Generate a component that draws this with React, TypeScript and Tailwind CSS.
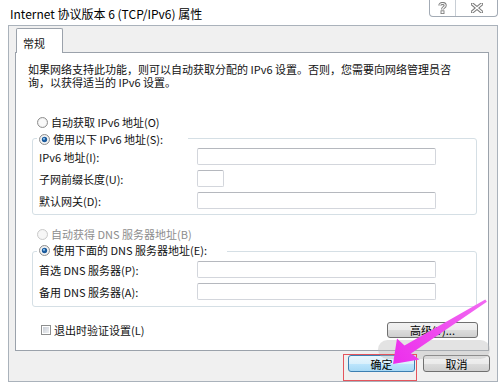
import React from 'react';

function Radio({ checked, disabled }: { checked?: boolean; disabled?: boolean }) {
  return (
    <svg width="11" height="11" viewBox="0 0 11 11" className="shrink-0">
      <circle
        cx="5.5"
        cy="5.5"
        r="5"
        fill={disabled ? '#f4f4f4' : '#eeeeee'}
        stroke={disabled ? '#c9c9c9' : '#8f8f8f'}
        strokeWidth="1"
      />
      <circle cx="5.5" cy="5.5" r="3.6" fill={disabled ? '#f7f7f7' : '#f9f9f9'} />
      {checked && (
        <>
          <circle cx="5.5" cy="5.5" r="2.7" fill="#1c5b9c" />
          <circle cx="5" cy="4.8" r="1.1" fill="#8ec2ef" />
        </>
      )}
    </svg>
  );
}

function Checkbox() {
  return (
    <div className="flex h-[10px] w-[10px] shrink-0 items-center justify-center border border-[#8e8f8f] bg-white">
      <div className="h-[6px] w-[6px] bg-[linear-gradient(135deg,#c9ced6,#eef0f2)]" />
    </div>
  );
}

function Field({ label, small, className }: { label: string; small?: boolean; className: string }) {
  return (
    <div className={'flex h-[17px] items-center ' + className}>
      <span className="w-[164px] pl-[6px] whitespace-nowrap">{label}</span>
      <div
        className={
          small
            ? 'h-[17px] w-[27px] rounded-[2px] border border-[#d3d6dc] border-t-[#b5b8be] bg-white'
            : 'h-[17px] w-[239px] rounded-[2px] border border-[#d3d6dc] border-t-[#b5b8be] bg-white'
        }
      />
    </div>
  );
}

const btn =
  'flex items-center justify-center rounded-[3px] border border-[#707070] bg-[linear-gradient(#f2f2f2_0%,#ebebeb_50%,#dddddd_50%,#cfcfcf_100%)] text-[11px] leading-[12px] text-black';

export default function App() {
  return (
    <div className="relative h-[388px] w-[501px] overflow-hidden bg-white font-['Noto_Sans_CJK_SC','Noto_Sans',sans-serif] text-[11px] leading-[12px] text-[#111]">
      {/* title bar */}
      <div className="flex h-[25px] items-start">
        <div className="pl-[10px] pt-[6px] text-[12px] leading-[16px] whitespace-nowrap text-black">
          Internet 协议版本 6 (TCP/IPv6) 属性
        </div>
        <div className="ml-auto mr-[3px] flex h-[17px] w-[69px] rounded-b-[4px] border border-t-0 border-[#a3abb5] bg-white">
          <div className="flex w-[26px] items-center justify-center border-r border-[#c8ced5]">
            <svg width="9" height="12" viewBox="0 0 9 12">
              <path d="M1.8 3.4 C1.8 0.8 7.2 0.8 7.2 3.4 C7.2 5.4 4.5 5.2 4.5 7.6" fill="none" stroke="#7d7d7d" strokeWidth="3" />
              <path d="M1.8 3.4 C1.8 0.8 7.2 0.8 7.2 3.4 C7.2 5.4 4.5 5.2 4.5 7.6" fill="none" stroke="#ffffff" strokeWidth="1.1" />
              <rect x="3" y="8.8" width="3" height="2.8" fill="#ffffff" stroke="#7d7d7d" strokeWidth="0.9" />
            </svg>
          </div>
          <div className="flex flex-1 items-center justify-center">
            <svg width="12" height="10" viewBox="0 0 12 10">
              <path d="M1.5 1.2 L10.5 8.8 M10.5 1.2 L1.5 8.8" stroke="#7d7d7d" strokeWidth="3.4" strokeLinecap="square" />
              <path d="M1.5 1.2 L10.5 8.8 M10.5 1.2 L1.5 8.8" stroke="#ffffff" strokeWidth="1.3" strokeLinecap="square" />
            </svg>
          </div>
        </div>
      </div>

      {/* client area */}
      <div className="ml-[8px] flex h-[357px] w-[490px] flex-col border border-[#aab2bb] bg-[#f0f0f0]">
        <div className="relative z-10 -mb-px ml-[7px] mt-[2px] h-[25px] w-[47px] rounded-t-[2px] border border-b-0 border-[#9ba2ab] bg-white pl-[6px] pt-[8px]">
          常规
        </div>
        <div className="ml-[6px] flex h-[299px] w-[474px] flex-col border border-[#9ba2ab] bg-white">
          <div className="ml-[12px] mt-[10px] whitespace-nowrap leading-[13px]">
            如果网络支持此功能，则可以自动获取分配的 IPv6 设置。否则，您需要向网络管理员咨
            <br />
            询，以获得适当的 IPv6 设置。
          </div>

          <div className="ml-[21px] mt-[26px] flex h-[14px] items-center gap-[3px] whitespace-nowrap">
            <Radio />
            自动获取 IPv6 地址(O)
          </div>

          <div className="ml-[16px] mt-[9px] flex h-[77px] w-[445px] flex-col rounded-[3px] border border-[#d5dfe5]">
            <div className="-mt-[7px] ml-[4px] flex h-[14px] w-[151px] items-center gap-[3px] bg-white pl-[2px] whitespace-nowrap">
              <Radio checked />
              使用以下 IPv6 地址(S):
            </div>
            <Field className="mt-[2px]" label="IPv6 地址(I):" />
            <Field className="mt-[5px]" label="子网前缀长度(U):" small />
            <Field className="mt-[5px]" label="默认网关(D):" />
          </div>

          <div className="ml-[21px] mt-[12px] flex h-[14px] items-center gap-[3px] whitespace-nowrap text-[#8d8d8d]">
            <Radio disabled />
            自动获得 DNS 服务器地址(B)
          </div>

          <div className="ml-[16px] mt-[10px] flex h-[56px] w-[445px] flex-col rounded-[3px] border border-[#d5dfe5]">
            <div className="-mt-[9px] ml-[4px] flex h-[14px] w-[190px] items-center gap-[3px] bg-white pl-[2px] whitespace-nowrap">
              <Radio checked />
              使用下面的 DNS 服务器地址(E):
            </div>
            <Field className="mt-[4px]" label="首选 DNS 服务器(P):" />
            <Field className="mt-[5px]" label="备用 DNS 服务器(A):" />
          </div>

          <div className="ml-[25px] mr-[10px] mt-[14px] flex h-[17px] items-center">
            <Checkbox />
            <span className="ml-[3px] whitespace-nowrap">退出时验证设置(L)</span>
            <div className={'ml-auto h-[16px] w-[91px] ' + btn}>高级(V)...</div>
          </div>
        </div>

        <div className="mr-[7px] mt-[4px] flex justify-end gap-[8px]">
          <div className="flex h-[17px] w-[67px] items-center justify-center rounded-[3px] border border-[#3c7fb1] bg-[linear-gradient(#eaf6fd_0%,#d9f0fc_50%,#bee6fd_50%,#a7d9f5_100%)] text-[11px] leading-[12px] text-black">
            确定
          </div>
          <div className={'h-[17px] w-[67px] ' + btn}>取消</div>
        </div>
      </div>

      {/* watermark blob */}
      <div className="pointer-events-none absolute left-[378px] top-[340px] h-[19px] w-[112px] rounded-[10px] bg-[#b8b8b8]/40" />

      {/* red annotation box */}
      <div className="pointer-events-none absolute left-[343px] top-[354px] h-[27px] w-[74px] border border-[#e4545c]" />

      {/* pink arrow */}
      <svg className="pointer-events-none absolute left-0 top-0" width="501" height="388" viewBox="0 0 501 388">
        <defs>
          <linearGradient id="arrowGrad" x1="486" y1="300" x2="395" y2="362" gradientUnits="userSpaceOnUse">
            <stop offset="0" stopColor="#f26af2" />
            <stop offset="1" stopColor="#ec2fec" />
          </linearGradient>
        </defs>
        <polygon
          points="485.3,299.4 486.9,301.8 411,353.5 419.5,359.5 393,364 397,338.5 404.5,345.5"
          fill="url(#arrowGrad)"
        />
      </svg>
    </div>
  );
}
